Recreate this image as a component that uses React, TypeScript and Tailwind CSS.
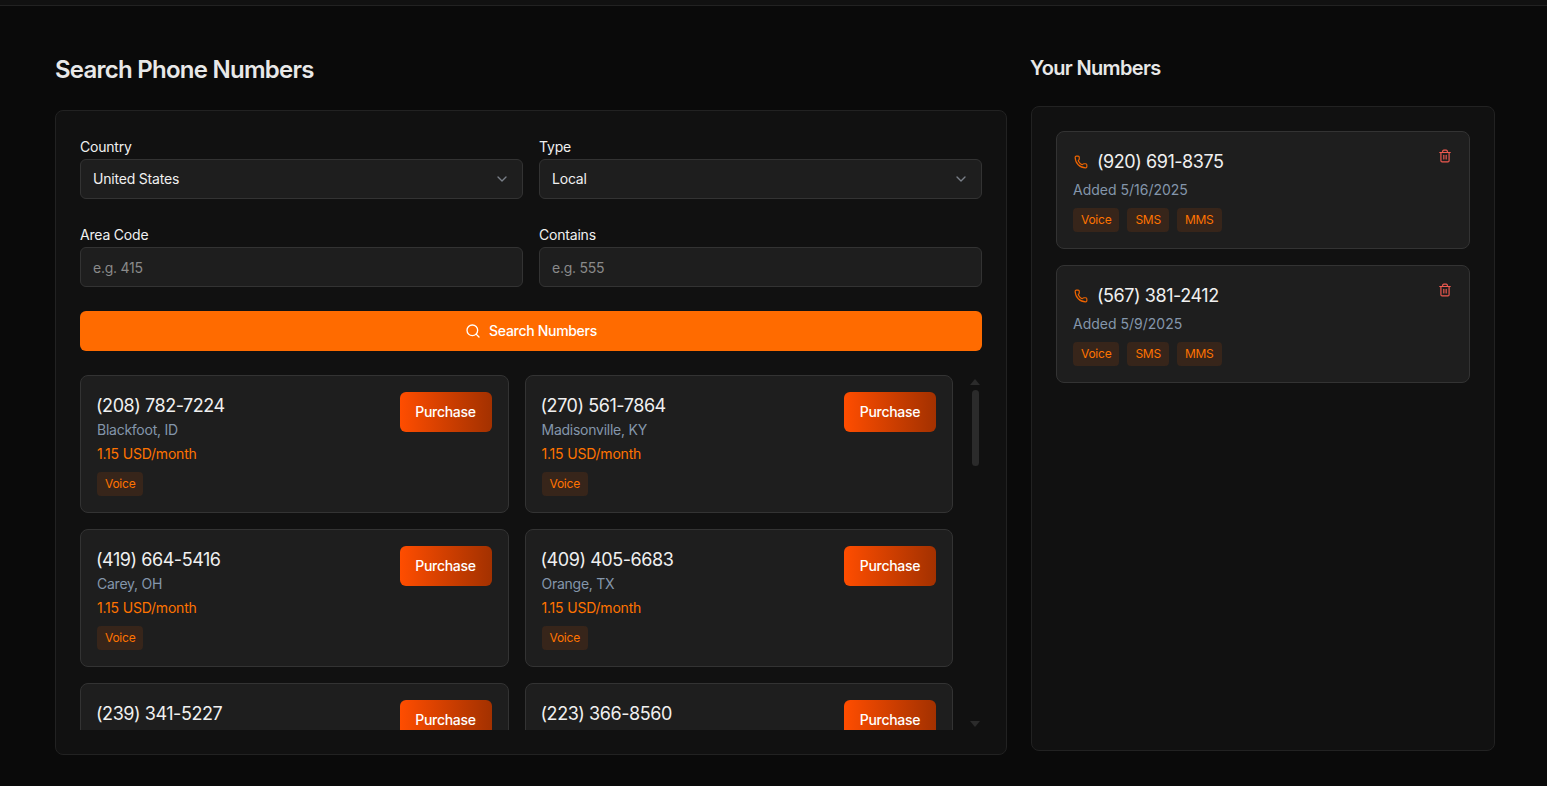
import { ChevronDown, Phone, Search, Trash2 } from 'lucide-react'

const results = [
  { number: '(208) 782-7224', place: 'Blackfoot, ID' },
  { number: '(270) 561-7864', place: 'Madisonville, KY' },
  { number: '(419) 664-5416', place: 'Carey, OH' },
  { number: '(409) 405-6683', place: 'Orange, TX' },
  { number: '(239) 341-5227', place: 'Fort Myers, FL' },
  { number: '(223) 366-8560', place: 'York, PA' },
]

const owned = [
  { number: '(920) 691-8375', added: 'Added 5/16/2025' },
  { number: '(567) 381-2412', added: 'Added 5/9/2025' },
]

function Badge({ label }: { label: string }) {
  return (
    <span className="rounded bg-[#37251a] px-2 py-1 text-xs leading-4 tracking-[-0.25px] text-[#ff7300]">
      {label}
    </span>
  )
}

function SelectField({ label, value }: { label: string; value: string }) {
  return (
    <div>
      <div className="h-6 text-sm leading-6 tracking-[-0.2px] text-[#f0f0f0]">{label}</div>
      <div className="flex h-10 items-center justify-between rounded-md border border-[#333333] bg-[#1e1e1e] px-3 text-sm tracking-[-0.2px] text-[#f0f0f0]">
        <span>{value}</span>
        <ChevronDown className="h-4 w-4 text-[#7a7f88]" />
      </div>
    </div>
  )
}

function InputField({ label, placeholder }: { label: string; placeholder: string }) {
  return (
    <div>
      <div className="h-6 text-sm leading-6 tracking-[-0.2px] text-[#f0f0f0]">{label}</div>
      <input
        placeholder={placeholder}
        className="block h-10 w-full rounded-md border border-[#333333] bg-[#1e1e1e] px-3 text-sm tracking-[-0.25px] text-[#f0f0f0] outline-none placeholder:text-[#8a8a8a]"
      />
    </div>
  )
}

export default function App() {
  return (
    <div className="h-[786px] overflow-hidden bg-[#0a0a0a] font-['Inter',sans-serif]">
      <div className="h-[6px] border-b border-[#222222] bg-[#111111]" />
      <div className="flex gap-6 pl-[55px] pt-12">
        <div className="w-[952px]">
          <h2 className="mb-6 text-2xl font-semibold tracking-[-0.75px] text-[#e8e8e8]">Search Phone Numbers</h2>
          <div className="h-[645px] rounded-lg border border-[#222222] bg-[#111111] p-6">
            <div className="grid grid-cols-2 gap-x-4 gap-y-6">
              <SelectField label="Country" value="United States" />
              <SelectField label="Type" value="Local" />
              <InputField label="Area Code" placeholder="e.g. 415" />
              <InputField label="Contains" placeholder="e.g. 555" />
            </div>
            <button className="mt-6 flex h-10 w-full items-center justify-center gap-2 rounded-md bg-[#ff6b00] text-sm font-medium tracking-[-0.3px] text-white">
              <Search className="h-4 w-4" />
              Search Numbers
            </button>
            <div className="mt-6 flex h-[355px] overflow-hidden">
              <div className="grid w-[873px] shrink-0 grid-cols-2 content-start gap-4">
                {results.map((r) => (
                  <div
                    key={r.number}
                    className="flex h-[138px] items-start justify-between rounded-lg border border-[#333333] bg-[#1e1e1e] p-4"
                  >
                    <div>
                      <div className="-ml-px text-lg leading-7 tracking-[-0.45px] text-[#f0f0f0]">{r.number}</div>
                      <div className="text-sm leading-5 tracking-[-0.25px] text-[#8496ab]">{r.place}</div>
                      <div className="mt-1 text-sm leading-5 tracking-[-0.2px] text-[#ff7300]">1.15 USD/month</div>
                      <div className="mt-2 flex">
                        <Badge label="Voice" />
                      </div>
                    </div>
                    <button className="h-10 w-[92px] rounded-md bg-gradient-to-r from-[#ff4d00] to-[#a33100] text-sm font-medium tracking-[-0.3px] text-white">
                      Purchase
                    </button>
                  </div>
                ))}
              </div>
              <div className="ml-[17px] flex w-[10px] flex-col items-center">
                <div className="mt-1 h-0 w-0 border-x-[5px] border-b-[6px] border-x-transparent border-b-[#2b2b2b]" />
                <div className="mt-[5px] h-[76px] w-[7px] rounded bg-[#2b2b2b]" />
                <div className="mt-[255px] h-0 w-0 border-x-[5px] border-t-[6px] border-x-transparent border-t-[#2b2b2b]" />
              </div>
            </div>
          </div>
        </div>
        <div className="w-[464px]">
          <h2 className="mb-6 -ml-px text-xl font-semibold tracking-[-0.65px] text-[#e8e8e8]">Your Numbers</h2>
          <div className="flex h-[645px] flex-col gap-4 rounded-lg border border-[#222222] bg-[#111111] p-6">
            {owned.map((n) => (
              <div
                key={n.number}
                className="flex h-[118px] items-start justify-between rounded-lg border border-[#333333] bg-[#1e1e1e] p-4"
              >
                <div>
                  <div className="flex items-center gap-[9px] text-lg leading-7 tracking-[-0.45px] text-[#f0f0f0]">
                    <Phone className="ml-px h-3.5 w-3.5 text-[#ee6400]" />
                    {n.number}
                  </div>
                  <div className="mt-1 text-sm leading-5 text-[#8496ab]">{n.added}</div>
                  <div className="mt-2 flex gap-2">
                    <Badge label="Voice" />
                    <Badge label="SMS" />
                    <Badge label="MMS" />
                  </div>
                </div>
                <Trash2 className="mt-px mr-px h-3.5 w-3.5 text-[#ef5a50]" />
              </div>
            ))}
          </div>
        </div>
      </div>
    </div>
  )
}
